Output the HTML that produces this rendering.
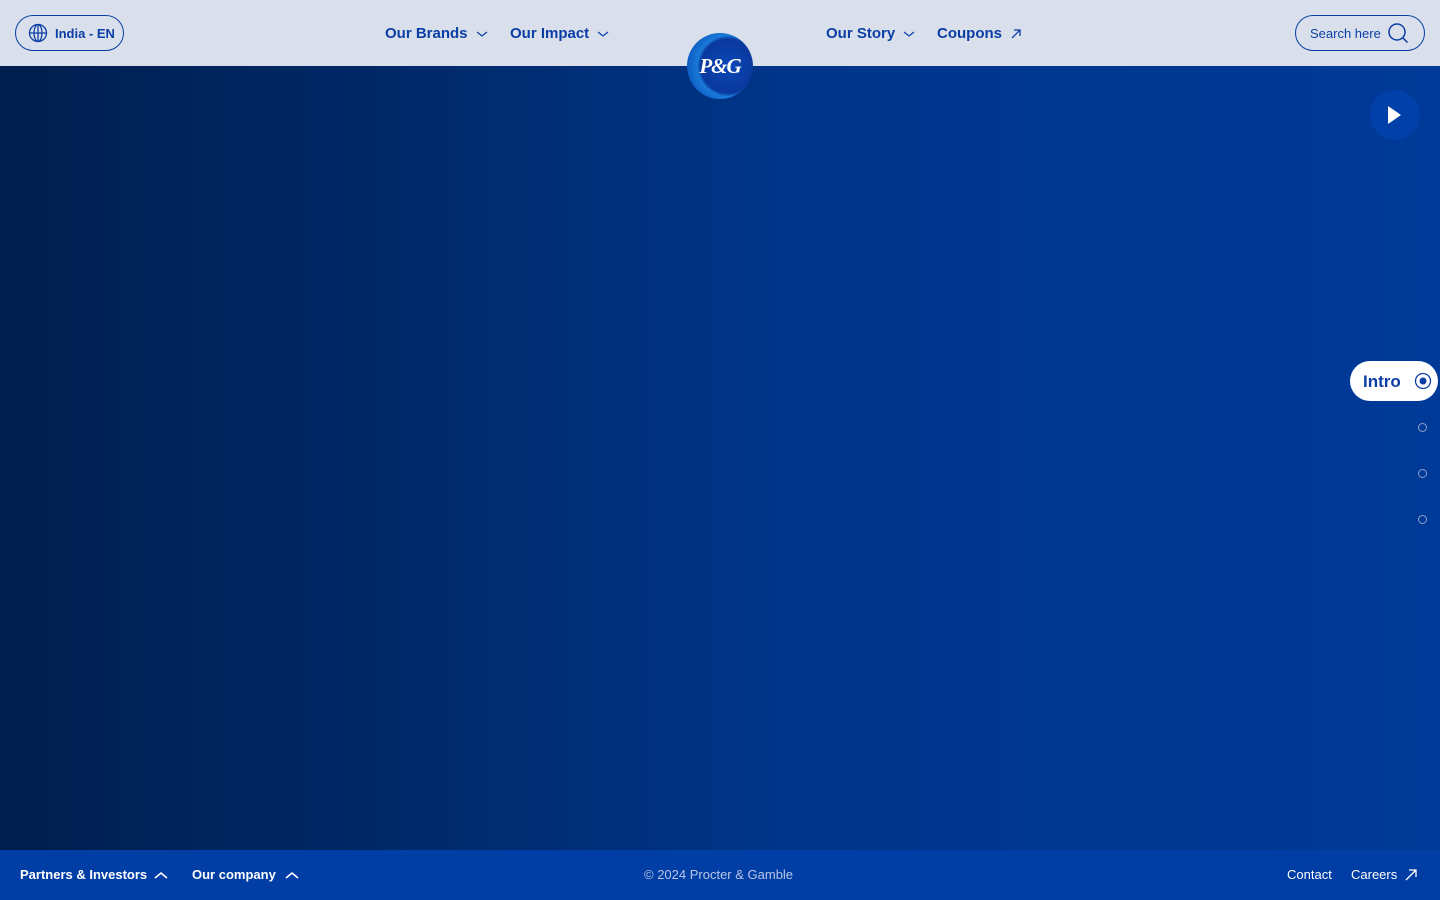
<!DOCTYPE html>
<html><head><meta charset="utf-8"><style>
*{margin:0;padding:0;box-sizing:border-box}
body{width:1440px;height:900px;overflow:hidden;font-family:"Liberation Sans",sans-serif;position:relative;background:linear-gradient(90deg,#001e4e 0%,#002a6b 30%,#00358a 55%,#003a98 100%)}
header{position:absolute;top:0;left:0;width:1440px;height:66px;background:#dae0eb}
.pill{position:absolute;top:15px;height:36px;border:1px solid #0a3ea6;border-radius:18px;color:#0a3ea6;font-size:13px;font-weight:bold;display:flex;align-items:center}
.nav{position:absolute;top:25px;color:#0a3ea6;font-size:15px;font-weight:bold;display:flex;align-items:center;gap:8px}
.logo{position:absolute;left:687px;top:33px;width:66px;height:66px;border-radius:50%;background:radial-gradient(circle at 62% 50%,#0a48b8 0%,#0a3aa0 45%,#0a3aa0 52%,#1a7ad8 58%,#0a58c0 80%,#06277a 100%);color:#fff;font-family:"Liberation Serif",serif;font-style:italic;font-weight:bold;font-size:21px;display:flex;align-items:center;justify-content:center;letter-spacing:-1px}
.play{position:absolute;left:1370px;top:90px;width:50px;height:50px;border-radius:50%;background:#0040a8}
.intro{position:absolute;left:1350px;top:361px;width:88px;height:40px;border-radius:20px;background:#fff;color:#0a3ea6;font-weight:bold;font-size:17px;padding-left:13px;line-height:41px}
.dot{position:absolute;left:1418px;width:9px;height:9px;border:1.5px solid #8fa3cc;border-radius:50%}
footer{position:absolute;left:0;top:850px;width:1440px;height:50px;background:#003da5;color:#fff;font-size:13px}
footer span{position:absolute;top:17px}
</style></head><body>
<header>
<div class="pill" style="left:15px;width:109px;padding-left:12px;gap:7px">
<svg width="20" height="20" viewBox="0 0 20 20" fill="none" stroke="#0a3ea6" stroke-width="1.3"><circle cx="10" cy="10" r="8.5"/><ellipse cx="10" cy="10" rx="4" ry="8.5"/><path d="M1.5 10h17M10 1.5v17"/></svg>India - EN</div>
<div class="nav" style="left:385px">Our Brands <svg width="12" height="8" viewBox="0 0 12 8" fill="none" stroke="#0a3ea6" stroke-width="1.2"><path d="M1 2l5 4 5-4"/></svg></div>
<div class="nav" style="left:510px">Our Impact <svg width="12" height="8" viewBox="0 0 12 8" fill="none" stroke="#0a3ea6" stroke-width="1.2"><path d="M1 2l5 4 5-4"/></svg></div>
<div class="nav" style="left:826px">Our Story <svg width="12" height="8" viewBox="0 0 12 8" fill="none" stroke="#0a3ea6" stroke-width="1.2"><path d="M1 2l5 4 5-4"/></svg></div>
<div class="nav" style="left:937px">Coupons <svg width="12" height="12" viewBox="0 0 12 12" fill="none" stroke="#0a3ea6" stroke-width="1.3"><path d="M2 10L10 2M4 2h6v6"/></svg></div>
<div class="pill" style="left:1295px;width:130px;padding-left:14px;gap:6px;font-weight:normal">Search here <svg width="22" height="22" viewBox="0 0 22 22" fill="none" stroke="#0a3ea6" stroke-width="1.5"><circle cx="10" cy="10" r="8"/><path d="M16 16l4.5 4.5"/></svg></div>
</header>
<div class="logo">P&amp;G</div>
<div class="play"><svg width="50" height="50" viewBox="0 0 50 50"><path d="M18 16v18l13-9z" fill="#fff"/></svg></div>
<div class="intro">Intro<svg style="position:absolute;left:64px;top:11px" width="18" height="18" viewBox="0 0 18 18"><circle cx="9" cy="9" r="7.5" fill="none" stroke="#0a3ea6" stroke-width="1.3"/><circle cx="9" cy="9" r="3.5" fill="#0a3ea6"/></svg></div>
<div class="dot" style="top:423px"></div>
<div class="dot" style="top:469px"></div>
<div class="dot" style="top:515px"></div>
<footer>
<span style="left:20px;font-weight:bold">Partners &amp; Investors</span>
<svg style="position:absolute;left:154px;top:21px" width="14" height="9" viewBox="0 0 14 9" fill="none" stroke="#fff" stroke-width="1.6"><path d="M1 7l6-5 6 5"/></svg>
<span style="left:192px;font-weight:bold">Our company</span>
<svg style="position:absolute;left:285px;top:21px" width="14" height="9" viewBox="0 0 14 9" fill="none" stroke="#fff" stroke-width="1.6"><path d="M1 7l6-5 6 5"/></svg>
<span style="left:644px;color:#b8c6e6">© 2024 Procter &amp; Gamble</span>
<span style="left:1287px">Contact</span>
<span style="left:1351px">Careers</span>
<svg style="position:absolute;left:1405px;top:19px" width="12" height="12" viewBox="0 0 12 12" fill="none" stroke="#fff" stroke-width="1.3"><path d="M1 11L11 1M4 1h7v7"/></svg>
</footer>
</body></html>
